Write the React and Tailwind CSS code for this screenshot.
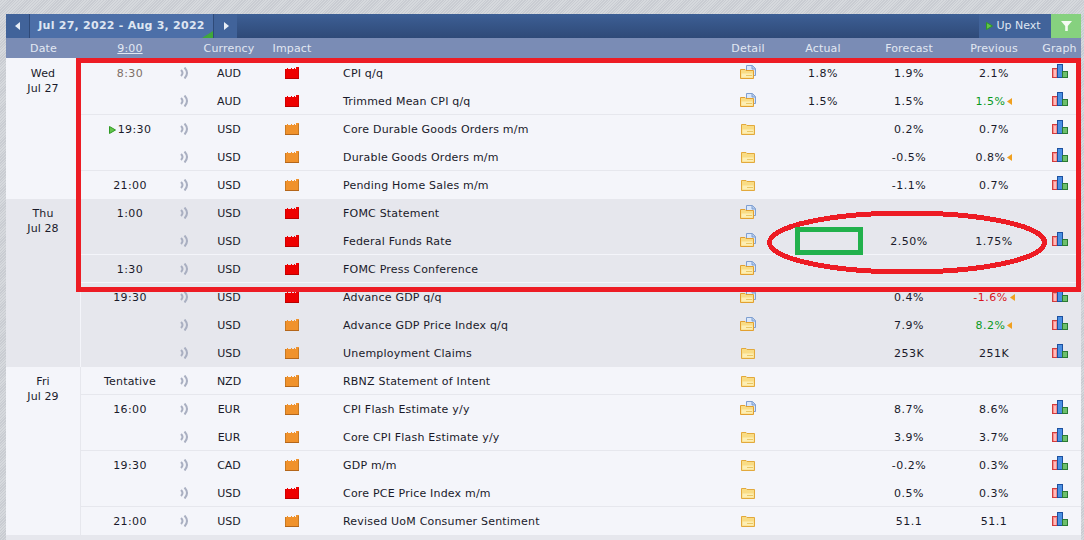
import React from "react";

const days = [
  {
    day: "Wed", date: "Jul 27", bg: "bg-[#f4f5fa]", line: "border-[#e6e7ed]", rowLine: "shadow-[0_-1px_0_#e6e7ed]",
    rows: [
      { time: "8:30", past: true, cur: "AUD", high: true, name: "CPI q/q", doc: true, actual: "1.8%", forecast: "1.9%", previous: "2.1%", graph: true },
      { cur: "AUD", high: true, name: "Trimmed Mean CPI q/q", doc: true, actual: "1.5%", forecast: "1.5%", previous: "1.5%", prevColor: "text-[#0a9a1e]", rev: true, graph: true },
      { time: "19:30", next: true, cur: "USD", name: "Core Durable Goods Orders m/m", forecast: "0.2%", previous: "0.7%", graph: true },
      { cur: "USD", name: "Durable Goods Orders m/m", forecast: "-0.5%", previous: "0.8%", rev: true, graph: true },
      { time: "21:00", cur: "USD", name: "Pending Home Sales m/m", forecast: "-1.1%", previous: "0.7%", graph: true },
    ],
  },
  {
    day: "Thu", date: "Jul 28", bg: "bg-[#e6e7ed]", line: "border-[#f4f5fa]", rowLine: "shadow-[0_-1px_0_#f4f5fa]",
    rows: [
      { time: "1:00", cur: "USD", high: true, name: "FOMC Statement", doc: true },
      { cur: "USD", high: true, name: "Federal Funds Rate", doc: true, forecast: "2.50%", previous: "1.75%", graph: true },
      { time: "1:30", cur: "USD", high: true, name: "FOMC Press Conference", doc: true },
      { time: "19:30", cur: "USD", high: true, name: "Advance GDP q/q", doc: true, forecast: "0.4%", previous: "-1.6%", prevColor: "text-[#d8141c]", rev: true, graph: true },
      { cur: "USD", name: "Advance GDP Price Index q/q", doc: true, forecast: "7.9%", previous: "8.2%", prevColor: "text-[#0a9a1e]", rev: true, graph: true },
      { cur: "USD", name: "Unemployment Claims", forecast: "253K", previous: "251K", graph: true },
    ],
  },
  {
    day: "Fri", date: "Jul 29", bg: "bg-[#f4f5fa]", line: "border-[#e6e7ed]", rowLine: "shadow-[0_-1px_0_#e6e7ed]",
    rows: [
      { time: "Tentative", cur: "NZD", name: "RBNZ Statement of Intent" },
      { time: "16:00", cur: "EUR", name: "CPI Flash Estimate y/y", doc: true, forecast: "8.7%", previous: "8.6%", graph: true },
      { cur: "EUR", name: "Core CPI Flash Estimate y/y", forecast: "3.9%", previous: "3.7%", graph: true },
      { time: "19:30", cur: "CAD", name: "GDP m/m", forecast: "-0.2%", previous: "0.3%", graph: true },
      { cur: "USD", high: true, name: "Core PCE Price Index m/m", forecast: "0.5%", previous: "0.3%", graph: true },
      { time: "21:00", cur: "USD", name: "Revised UoM Consumer Sentiment", forecast: "51.1", previous: "51.1", graph: true },
    ],
  },
];

const SoundIcon = () => (
  <svg width="9" height="12" viewBox="0 0 9 12" fill="none" stroke="#a9afc1" strokeWidth="2" className="shrink-0">
    <path d="M1 3 Q4 6 1 9" />
    <path d="M4.5 0.5 Q9.5 6 4.5 11.5" />
  </svg>
);

const ImpactIcon = ({ high }) => (
  <svg width="14" height="12" viewBox="0 0 14 12" shapeRendering="crispEdges">
    <path
      d="M0 12 V2 H2 V1 H3 V2 H6 V1 H7 V2 H9 V1 H10 V2 H11 V0 H14 V12 Z"
      fill={high ? "#ee0000" : "#f0922c"}
    />
    <path d="M0 11 H14 V12 H0 Z" fill={high ? "#b80000" : "#b4661a"} />
    <path d="M0 2 H1 V11 H0 Z M13 1 H14 V11 H13 Z" fill={high ? "#d00000" : "#c87a24"} />
  </svg>
);

const FolderIcon = () => (
  <svg width="14" height="11" viewBox="0 0 14 11">
    <path d="M0.5 10.5 V0.5 H5 L6 1.5 H13.5 V10.5 Z" fill="#f9dc84" stroke="#e2a93c" />
    <path d="M1.5 5.5 H12.5 V9.5 H1.5 Z" fill="#fdeeb4" />
    <path d="M6 7.5 H12" stroke="#eac766" />
  </svg>
);

const DocFolderIcon = () => (
  <svg width="16" height="14" viewBox="0 0 16 14">
    <path d="M6.5 0.5 H12.5 L15.5 3.5 V10.5 H6.5 Z" fill="#dbe8fa" stroke="#7f9fd0" />
    <path d="M12 0.5 V4 H15.5" fill="#b4caec" stroke="#7f9fd0" />
    <path d="M0.5 13.5 V4.5 H5 L6 5.5 H13.5 V13.5 Z" fill="#f9dc84" stroke="#e2a030" />
    <path d="M1.5 8.5 H12.5 V12.5 H1.5 Z" fill="#fdeeb4" />
    <path d="M6 10.5 H12" stroke="#eac766" />
  </svg>
);

const GraphIcon = () => (
  <svg width="16" height="14" viewBox="0 0 16 14" shapeRendering="crispEdges">
    <rect x="0.5" y="4.5" width="5" height="9" fill="#f88c8c" stroke="#d23c3c" />
    <rect x="2" y="6" width="2" height="7" fill="#ffbcbc" />
    <rect x="5.5" y="0.5" width="5" height="13" fill="#4a90e2" stroke="#1c50a0" />
    <rect x="10.5" y="7.5" width="5" height="6" fill="#6cc06c" stroke="#2a7a34" />
  </svg>
);

const PlayArrow = () => (
  <svg width="7" height="8" viewBox="0 0 7 8">
    <path d="M0.5 0.5 L6.5 4 L0.5 7.5 Z" fill="#62c44a" stroke="#2f9a24" />
  </svg>
);

const Row = ({ row, rowLine }) => (
  <div className={`h-[28px] flex items-center text-[11px] text-[#1a1a2a] ${row.time ? rowLine : ""}`}>
    <div className={`w-[98px] pt-[2px] flex items-center justify-center gap-[2px] ${row.time === "Tentative" ? "tracking-[0.2px]" : "tracking-[0.4px]"} ${row.past ? "text-[#7d6f66]" : ""}`}>
      {row.next && <PlayArrow />}
      <span>{row.time}</span>
    </div>
    <div className="w-[10px] flex justify-center"><SoundIcon /></div>
    <div className="w-[80px] pt-[2px] text-center">{row.cur}</div>
    <div className="w-[46px] flex justify-center"><ImpactIcon high={row.high} /></div>
    <div className="w-[403px] pt-[2px] pl-[28px] tracking-[0.2px]">{row.name}</div>
    <div className="w-[60px] flex justify-center">
      {row.doc ? <div className="-mt-[2px]"><DocFolderIcon /></div> : <div className="mt-[1px]"><FolderIcon /></div>}
    </div>
    <div className="w-[90px] pt-[2px] text-center tracking-[0.5px]">{row.actual}</div>
    <div className="w-[82px] pt-[2px] text-center tracking-[0.5px]">{row.forecast}</div>
    <div className={`w-[88px] pt-[2px] flex items-center justify-center gap-[2px] tracking-[0.5px] ${row.prevColor || ""}`}>
      <span>{row.previous}</span>
      {row.rev && (
        <svg width="5" height="7" viewBox="0 0 5 7" className="-mt-[2px]"><path d="M5 0 V7 L0 3.5 Z" fill="#f0a020" /></svg>
      )}
    </div>
    <div className="w-[43px] flex justify-center -mt-[4px]">{row.graph && <GraphIcon />}</div>
  </div>
);

export default function App() {
  return (
    <div
      className="relative w-[1084px] h-[540px] overflow-hidden pl-[6px] pr-[3px] pt-[14px] bg-[repeating-linear-gradient(135deg,#d6d9dd_0px,#d6d9dd_1px,#c9ccd2_1px,#c9ccd2_2px)]"
      style={{ fontFamily: '"DejaVu Sans", Verdana, sans-serif' }}
    >
      {/* Toolbar */}
      <div className="h-[24px] flex bg-gradient-to-b from-[#3d5f95] to-[#2f4a78] text-[#dfe6f2] text-[11px]">
        <button className="w-[23px] flex items-center justify-center bg-[#41639a]">
          <svg width="6" height="8" viewBox="0 0 6 8"><path d="M5 0 V8 L0 4 Z" fill="#e8edf5" /></svg>
        </button>
        <div className="relative w-[185px] flex items-center justify-center font-bold text-[11px] tracking-[0.25px] bg-[#4c6fa8] border-x border-[#2f4a78]">
          Jul 27, 2022 - Aug 3, 2022
          <div className="absolute right-0 bottom-0 w-0 h-0 border-l-[11px] border-b-[7px] border-l-transparent border-b-[#3fa83a]" />
        </div>
        <button className="w-[23px] flex items-center justify-center bg-[#41639a]">
          <svg width="6" height="8" viewBox="0 0 6 8"><path d="M1 0 V8 L6 4 Z" fill="#e8edf5" /></svg>
        </button>
        <div className="flex-1" />
        <div className="w-[72px] pr-[3px] flex items-center justify-center gap-[3px] bg-[#41639a]">
          <PlayArrow />
          <span>Up Next</span>
        </div>
        <div className="w-[30px] flex items-center justify-center bg-[#86d17f]">
          <svg width="11" height="10" viewBox="0 0 11 10"><path d="M0 0 H11 L6.8 5 V10 H4.2 V5 Z" fill="#f4fbf3" /></svg>
        </div>
      </div>

      {/* Column headers */}
      <div className="h-[20px] pt-[2px] flex items-center bg-[#7a8cb5] text-[#e2e8f2] text-[11px] tracking-[0.15px]">
        <div className="w-[75px] text-center">Date</div>
        <div className="w-[98px] text-center underline">9:00</div>
        <div className="w-[10px]" />
        <div className="w-[80px] text-center">Currency</div>
        <div className="w-[46px] text-center">Impact</div>
        <div className="w-[403px]" />
        <div className="w-[60px] text-center">Detail</div>
        <div className="w-[90px] text-center">Actual</div>
        <div className="w-[82px] text-center">Forecast</div>
        <div className="w-[88px] text-center">Previous</div>
        <div className="w-[43px] text-center">Graph</div>
      </div>

      {/* Days */}
      <div className="pt-[1px] bg-[#f4f5fa]">
        {days.map((d) => (
          <div key={d.day} className={`flex ${d.bg}`}>
            <div className={`w-[75px] shrink-0 border-r ${d.line} pt-[7px] text-center text-[11px] leading-[15px] text-[#1a1a2a] tracking-[0.1px]`}>
              <div>{d.day}</div>
              <div>{d.date}</div>
            </div>
            <div className="flex-1">
              {d.rows.map((row) => (
                <Row key={row.name} row={row} rowLine={d.rowLine} />
              ))}
            </div>
          </div>
        ))}
        <div className="h-[8px] bg-[#e6e7ed]" />
      </div>

      {/* Hand-drawn annotations on top of the table */}
      <div className="absolute left-[76px] top-[58px] w-[1005px] h-[234px] border-[5px] border-[#ed1c24]" />
      <svg className="absolute left-[765px] top-[209px]" width="284" height="67" viewBox="0 0 284 67" shapeRendering="crispEdges">
        <ellipse cx="142" cy="33.5" rx="137.5" ry="29.5" fill="none" stroke="#ed1c24" strokeWidth="5" />
      </svg>
      <div className="absolute left-[795px] top-[227px] w-[68px] h-[28px] border-[5px] border-[#22b14c]" />
    </div>
  );
}
